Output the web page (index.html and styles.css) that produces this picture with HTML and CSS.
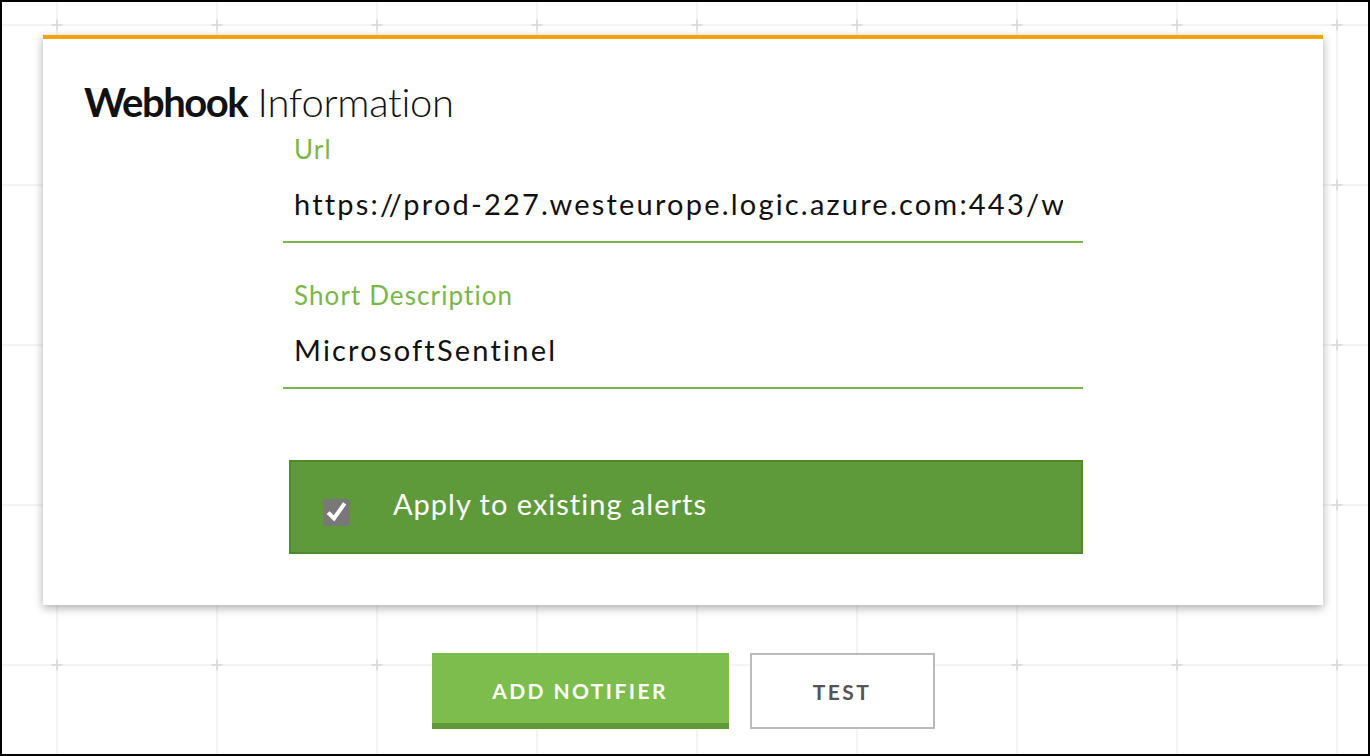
FILE: index.html
```html
<!DOCTYPE html>
<html>
<head>
<meta charset="utf-8">
<link rel="stylesheet" href="styles.css">
</head>
<body>
<div class="frame">
  <section class="card">
    <h1 class="title"><strong>Webhook</strong> Information</h1>
    <div class="form">
      <div class="field">
        <label class="field-label">Url</label>
        <div class="field-value">https://prod-227.westeurope.logic.azure.com:443/workflows/</div>
      </div>
      <div class="field">
        <label class="field-label">Short Description</label>
        <div class="field-value">MicrosoftSentinel</div>
      </div>
      <div class="apply">
        <span class="check">
          <svg viewBox="0 0 27 27" width="27" height="27"><rect x="0" y="0" width="27" height="27" rx="3.5" fill="#787878"/><path d="M6.5 15 L11 19.5 L20.5 6" stroke="#fff" stroke-width="4" fill="none" stroke-linecap="square" stroke-linejoin="miter"/></svg>
        </span>
        <span class="apply-label">Apply to existing alerts</span>
      </div>
    </div>
  </section>
  <div class="actions">
    <button class="btn btn-primary">ADD NOTIFIER</button>
    <button class="btn btn-secondary">TEST</button>
  </div>
</div>
</body>
</html>
```
FILE: styles.css
```css
html, body {
  margin: 0;
  padding: 0;
}
body {
  font-family: "Lato", "Noto Sans", sans-serif;
  background: #fff;
}
.frame {
  width: 1370px;
  height: 756px;
  box-sizing: border-box;
  border: 2px solid #000;
  background-color: #fff;
  background-image: url("data:image/svg+xml,%3Csvg xmlns='http://www.w3.org/2000/svg' width='160' height='160'%3E%3Crect x='79' y='0' width='2' height='160' fill='%23f4f4f4'/%3E%3Crect x='0' y='79' width='160' height='2' fill='%23f4f4f4'/%3E%3Crect x='74.5' y='79.2' width='11' height='1.6' fill='%23d9d9d9'/%3E%3Crect x='79.2' y='74.5' width='1.6' height='11' fill='%23d9d9d9'/%3E%3C/svg%3E");
  background-position: -25px -57px;
  overflow: hidden;
}
.card {
  margin: 33px 0 0 41px;
  width: 1280px;
  height: 570px;
  box-sizing: border-box;
  border-top: 4px solid #f0a30a;
  background: #fff;
  box-shadow: 0 3px 9px rgba(0, 0, 0, 0.32);
  padding: 41px 0 0 41px;
}
.title {
  margin: 0;
  font-size: 40px;
  line-height: 44px;
  font-weight: 300;
  color: #111;
  letter-spacing: -0.3px;
}
.title strong {
  font-weight: 700;
  letter-spacing: -1.5px;
}
.form {
  margin: 10px 0 0 199px;
  width: 800px;
}
.field {
  border-bottom: 2px solid #7ab648;
  padding: 0 11px 17px;
  margin-bottom: 37px;
}
.field + .field {
  margin-bottom: 71px;
}
.field-label {
  display: block;
  color: #7ab648;
  font-size: 26px;
  line-height: 30px;
  letter-spacing: 1.1px;
}
.field-value {
  margin-top: 20px;
  font-size: 29px;
  line-height: 40px;
  letter-spacing: 2.2px;
  color: #111;
  white-space: nowrap;
  overflow: hidden;
  width: 769px;
}
.apply {
  margin-left: 6px;
  height: 94px;
  box-sizing: border-box;
  background: #5f9a3a;
  border: 2px solid #4d8a2c;
  display: flex;
  align-items: center;
  padding-left: 32px;
}
.check {
  display: flex;
  width: 27px;
  height: 27px;
  margin-top: 10px;
}
.apply-label {
  margin-left: 43px;
  padding-bottom: 7px;
  color: #fff;
  font-size: 29px;
  letter-spacing: 1px;
}
.actions {
  display: flex;
  justify-content: center;
  gap: 21px;
  margin-top: 48px;
  padding-right: 4px;
}
.btn {
  font-family: "Lato", "Noto Sans", sans-serif;
  font-weight: 700;
  font-size: 21px;
  letter-spacing: 2.4px;
  height: 76px;
  box-sizing: border-box;
  cursor: pointer;
}
.btn-primary {
  width: 297px;
  background: #7cbd4e;
  color: #fff;
  border: none;
  border-bottom: 6px solid #5e9a39;
  padding-top: 6px;
}
.btn-secondary {
  width: 185px;
  background: #fff;
  color: #555;
  border: 2px solid #bbb;
}
```
